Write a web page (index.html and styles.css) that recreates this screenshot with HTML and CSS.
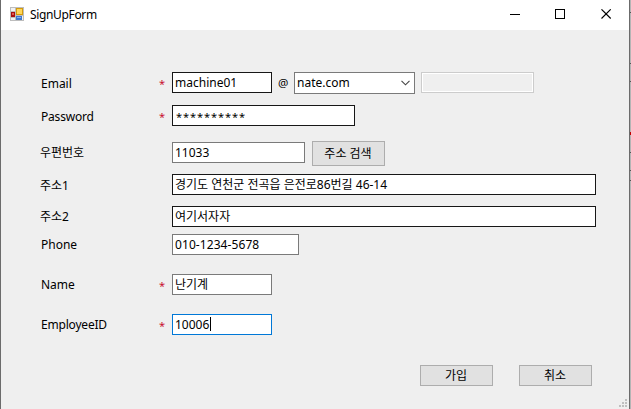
FILE: index.html
```html
<!DOCTYPE html>
<html lang="ko">
<head>
<meta charset="utf-8">
<title>SignUpForm</title>
<link rel="stylesheet" href="styles.css">
</head>
<body>
<div class="desktop">
  <div class="window">
    <header class="titlebar">
      <svg class="app-icon" width="14" height="14" viewBox="0 0 14 14" shape-rendering="crispEdges">
        <rect width="14" height="14" fill="#bdbdbd"/>
        <path d="M1 1h4v3H1zM1 11h4v2H1zM12 9h1v4h-1z" fill="#f2f2f2"/>
        <rect x="1" y="5" width="4" height="5" fill="#a80f0f"/>
        <rect x="2" y="6" width="2" height="2" fill="#e0574e"/>
        <rect x="6" y="1" width="7" height="7" fill="#d39b0c"/>
        <rect x="7" y="2" width="5" height="5" fill="#ffd65a"/>
        <rect x="6" y="9" width="6" height="4" fill="#3f78cf"/>
        <rect x="7" y="10" width="4" height="1" fill="#86b2ef"/>
      </svg>
      <span class="title">SignUpForm</span>
      <svg class="controls" width="103" height="10" viewBox="0 0 103 10" shape-rendering="crispEdges" fill="none" stroke="#000">
        <path d="M0 5.5h10M45.500 .5h9v9h-9z"/>
        <path d="M91.500 .3l9.200 9.200M100.700 .3l-9.200 9.200" shape-rendering="auto" stroke-width="1.100"/>
      </svg>
    </header>
    <main class="form">
      <div class="row row-email">
        <span class="label">Email</span><span class="star">*</span>
        <span class="field strong w-short">machine01</span>
        <span class="at">@</span>
        <span class="combo"><span>nate.com</span>
          <svg width="9" height="6" viewBox="0 0 9 6" fill="none" stroke="#444" stroke-width="1.100"><path d="M.5 .8l4 4 4-4"/></svg>
        </span>
        <span class="field disabled"></span>
      </div>
      <div class="row row-password">
        <span class="label tight">Password</span><span class="star">*</span>
        <span class="field strong w-password">**********</span>
      </div>
      <div class="row row-zip">
        <span class="label ko">우편번호</span><span class="star"></span>
        <span class="field w-zip">11033</span>
        <span class="button search">주소 검색</span>
      </div>
      <div class="row row-addr1">
        <span class="label ko">주소1</span><span class="star"></span>
        <span class="field strong w-wide">경기도 연천군 전곡읍 은전로86번길 46-14</span>
      </div>
      <div class="row row-addr2">
        <span class="label ko raised">주소2</span><span class="star"></span>
        <span class="field strong w-wide">여기서자자</span>
      </div>
      <div class="row row-phone">
        <span class="label raised">Phone</span><span class="star"></span>
        <span class="field w-phone">010-1234-5678</span>
      </div>
      <div class="row row-name">
        <span class="label raised">Name</span><span class="star">*</span>
        <span class="field w-short">난기계</span>
      </div>
      <div class="row row-id">
        <span class="label tight raised">EmployeeID</span><span class="star">*</span>
        <span class="field focus w-short">10006<i class="caret"></i></span>
      </div>
      <div class="actions">
        <span class="button">가입</span>
        <span class="button">취소</span>
      </div>
    </main>
    <svg class="grip" width="8" height="8" viewBox="0 0 8 8" shape-rendering="crispEdges" fill="#bfbfbf">
      <path d="M6 0h2v2h-2zM3 3h2v2h-2zM6 3h2v2h-2zM0 6h2v2h-2zM3 6h2v2h-2zM6 6h2v2h-2z"/>
    </svg>
  </div>
  <svg class="backdrop" width="1" height="409" viewBox="0 0 1 409" shape-rendering="crispEdges">
    <path fill="#b5b5b5" d="M0 0h1v409H0z"/>
    <path fill="#555" d="M0 12h1v1H0zM0 63h1v1H0zM0 81h1v1H0zM0 152h1v1H0zM0 170h1v1H0zM0 180h1v1H0z"/>
    <path fill="#c00000" d="M0 132h1v3H0z"/>
  </svg>
</div>
</body>
</html>
```
FILE: styles.css
```css
* { box-sizing: border-box; }

body {
  margin: 0;
  background: #b5b5b5;
  color: #000;
  font: 400 12px/19px "Noto Sans", "Noto Sans CJK KR", sans-serif;
  overflow: hidden;
}

.desktop { display: flex; width: 631px; height: 409px; }

.window {
  position: relative;
  width: 630px;
  height: 409px;
  border: solid #6b6b6b;
  border-width: 0 1px;
  background: #efefef;
}

.titlebar {
  display: flex;
  align-items: center;
  height: 30px;
  padding: 0 16px 2px 9px;
  background: #fff;
}
.title { margin-left: 6px; padding-top: 1px; letter-spacing: -.35px; }
.controls { margin-left: auto; }

.form {
  display: grid;
  grid-template-rows: 33px 36px 33px 32px 28px 40px 40px 51px 21px;
  padding: 42px 0 0 40px;
}

.row { display: flex; align-items: flex-start; white-space: pre; }
.label { width: 118px; height: 21px; padding-top: 2px; }
.label.ko { margin-left: -1px; width: 119px; }
.label.raised { padding-top: 1px; }
.label.tight { letter-spacing: -.2px; }
.star { width: 13px; padding-top: 2px; color: #c8102e; font-size: 11px; }

.field {
  display: flex;
  height: 21px;
  padding-left: 2px;
  border: 1px solid #7a7a7a;
  background: #fff;
}
.strong { border-color: #171717; }
.focus { border-color: #0078d7; }
.w-short { width: 100px; }
.w-password { width: 183px; padding: 1px 0 0 3px; font-size: 11px; letter-spacing: .94px; }
.w-zip { width: 133px; margin-top: 1px; }
.w-wide { width: 424px; }
.w-phone { width: 127px; letter-spacing: .08px; }
.disabled {
  width: 113px;
  margin-left: 6px;
  border-color: #ccc;
  background: #efefef;
  box-shadow: inset 0 0 0 1px #fff;
}

.at { width: 22px; padding: 1px 0 0 6px; font-size: 11.5px; }

.combo {
  display: flex;
  justify-content: space-between;
  align-items: center;
  width: 121px;
  height: 22px;
  padding: 0 4px 1px 2px;
  border: 1px solid #7a7a7a;
  background: #fff;
}

.caret { width: 1px; height: 14px; margin: 2px 0 0 1px; background: #000; }

.button {
  display: flex;
  justify-content: center;
  align-items: center;
  width: 73px;
  height: 21px;
  padding-right: 1px;
  border: 1px solid #adadad;
  background: #e1e1e1;
}
.search { height: 25px; margin-left: 7px; }

.actions { display: flex; gap: 26px; margin-left: 379px; }

.grip { position: absolute; right: 2px; bottom: 2px; }
```
